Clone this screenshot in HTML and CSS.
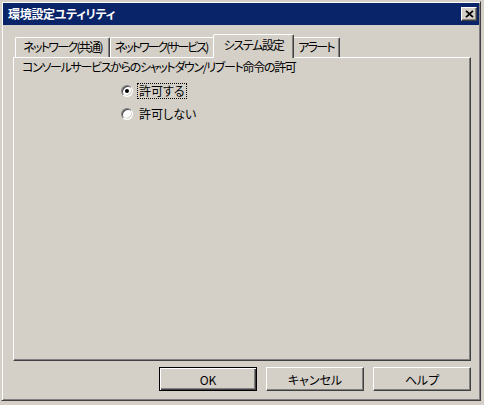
FILE: index.html
```html
<!DOCTYPE html>
<html lang="ja">
<head>
  <meta charset="UTF-8" />
  <title>環境設定ユティリティ</title>
  <link rel="stylesheet" href="styles.css">
</head>
<body>
  <div class="window">
    <div class="titlebar">
      <span class="title">環境設定ユティリティ</span>
      <button class="close" aria-label="閉じる">
        <svg width="9" height="8" viewBox="0 0 9 8">
          <path d="M1 0.8 L8 7.2 M8 0.8 L1 7.2" stroke="#000" stroke-width="1.8" fill="none" />
        </svg>
      </button>
    </div>

    <div class="content">
      <div class="tabs">
        <div class="tab tab-1">ネットワーク(共通)</div>
        <div class="tab tab-2">ネットワーク(サービス)</div>
        <div class="tab tab-3 active">システム設定</div>
        <div class="tab tab-4">アラート</div>
      </div>

      <div class="panel">
        <div class="caption">コンソールサービスからのシャットダウン/リブート命令の許可</div>
        <div class="options">
          <label class="option">
            <input type="radio" name="allow" checked>
            <span class="focus">許可する</span>
          </label>
          <label class="option">
            <input type="radio" name="allow">
            <span>許可しない</span>
          </label>
        </div>
      </div>

      <div class="buttons">
        <button class="btn default">OK</button>
        <button class="btn">キャンセル</button>
        <button class="btn">ヘルプ</button>
      </div>
    </div>
  </div>
</body>
</html>
```

FILE: styles.css
```css
body {
  margin: 0;
  background: #d4d0c8;
  font-family: "Noto Sans CJK JP", sans-serif;
  font-size: 12px;
  font-feature-settings: "palt";
  color: #000;
}

.window {
  margin: 1px 0 0 1px;
  width: 480px;
  height: 400px;
  box-sizing: border-box;
  border: 1px solid;
  border-color: #d4d0c8 #404040 #404040 #d4d0c8;
  box-shadow: inset 1px 1px #fff, inset -1px -1px #808080;
  padding: 1px;
  display: flex;
  flex-direction: column;
  background: #d4d0c8;
}

.titlebar {
  height: 22px;
  flex: none;
  background: #0a246a;
  color: #fff;
  display: flex;
  align-items: center;
  justify-content: space-between;
  padding: 0 2px 0 5px;
}

.title {
  font-weight: bold;
  font-size: 12px;
  line-height: 14px;
  letter-spacing: -0.3px;
}

.close {
  width: 16px;
  height: 14px;
  padding: 0;
  display: flex;
  align-items: center;
  justify-content: center;
  background: #d4d0c8;
  border: 1px solid;
  border-color: #fff #404040 #404040 #fff;
  box-shadow: inset -1px -1px #808080;
}

.content {
  flex: 1;
  padding: 9px 8px 8px 10px;
  display: flex;
  flex-direction: column;
}

.tabs {
  display: flex;
  align-items: flex-end;
  height: 23px;
  padding-left: 2px;
  flex: none;
  position: relative;
  z-index: 1;
}

.tab {
  height: 20px;
  box-sizing: border-box;
  border: 1px solid;
  border-bottom: none;
  border-color: #fff #404040 transparent #fff;
  box-shadow: inset -1px 0 #808080;
  border-radius: 2px 2px 0 0;
  text-align: center;
  line-height: 18px;
  letter-spacing: -1.7px;
  white-space: nowrap;
}

.tab-1 { width: 95px; }
.tab-2 { width: 105px; letter-spacing: -2px; padding-right: 3px; }
.tab-3 { width: 77px; }
.tab-4 { width: 48px; }

.tab.active {
  height: 24px;
  width: 81px;
  margin: 0 -2px -1px;
  line-height: 20px;
  letter-spacing: -1.3px;
  background: #d4d0c8;
  position: relative;
  z-index: 2;
}

.panel {
  flex: 1;
  border: 1px solid;
  border-color: #fff #404040 #404040 #fff;
  box-shadow: inset -1px -1px #808080;
}

.caption {
  margin: 2px 0 0 8px;
  line-height: 14px;
  letter-spacing: -1.3px;
}

.options {
  margin: 9px 0 0 105px;
  display: flex;
  flex-direction: column;
  gap: 7px;
}

.option {
  display: flex;
  align-items: center;
  height: 16px;
}

.option input {
  appearance: none;
  -webkit-appearance: none;
  width: 12px;
  height: 12px;
  margin: 0 4px 0 2px;
  border-radius: 50%;
  background: #fff;
  border: 1px solid;
  border-color: #808080 #fff #fff #808080;
  box-shadow: inset 1px 1px #404040, inset -1px -1px #d4d0c8;
  position: relative;
}

.option input:checked::after {
  content: "";
  position: absolute;
  left: 3px;
  top: 3px;
  width: 4px;
  height: 4px;
  border-radius: 50%;
  background: #000;
}

.option span {
  padding: 0 1px;
  line-height: 14px;
  border: 1px solid transparent;
}

.option .focus {
  border: 1px dotted #000;
}

.buttons {
  display: flex;
  justify-content: flex-end;
  gap: 9px;
  margin-top: 6px;
  flex: none;
}

.btn {
  width: 98px;
  height: 24px;
  font-family: inherit;
  font-size: 12px;
  font-feature-settings: "palt";
  background: #d4d0c8;
  border: 1px solid;
  border-color: #fff #404040 #404040 #fff;
  box-shadow: inset -1px -1px #808080;
  padding: 0;
}

.btn.default {
  border: 1px solid #000;
  box-shadow: inset 1px 1px #fff, inset -1px -1px #404040, inset -2px -2px #808080;
}
```
